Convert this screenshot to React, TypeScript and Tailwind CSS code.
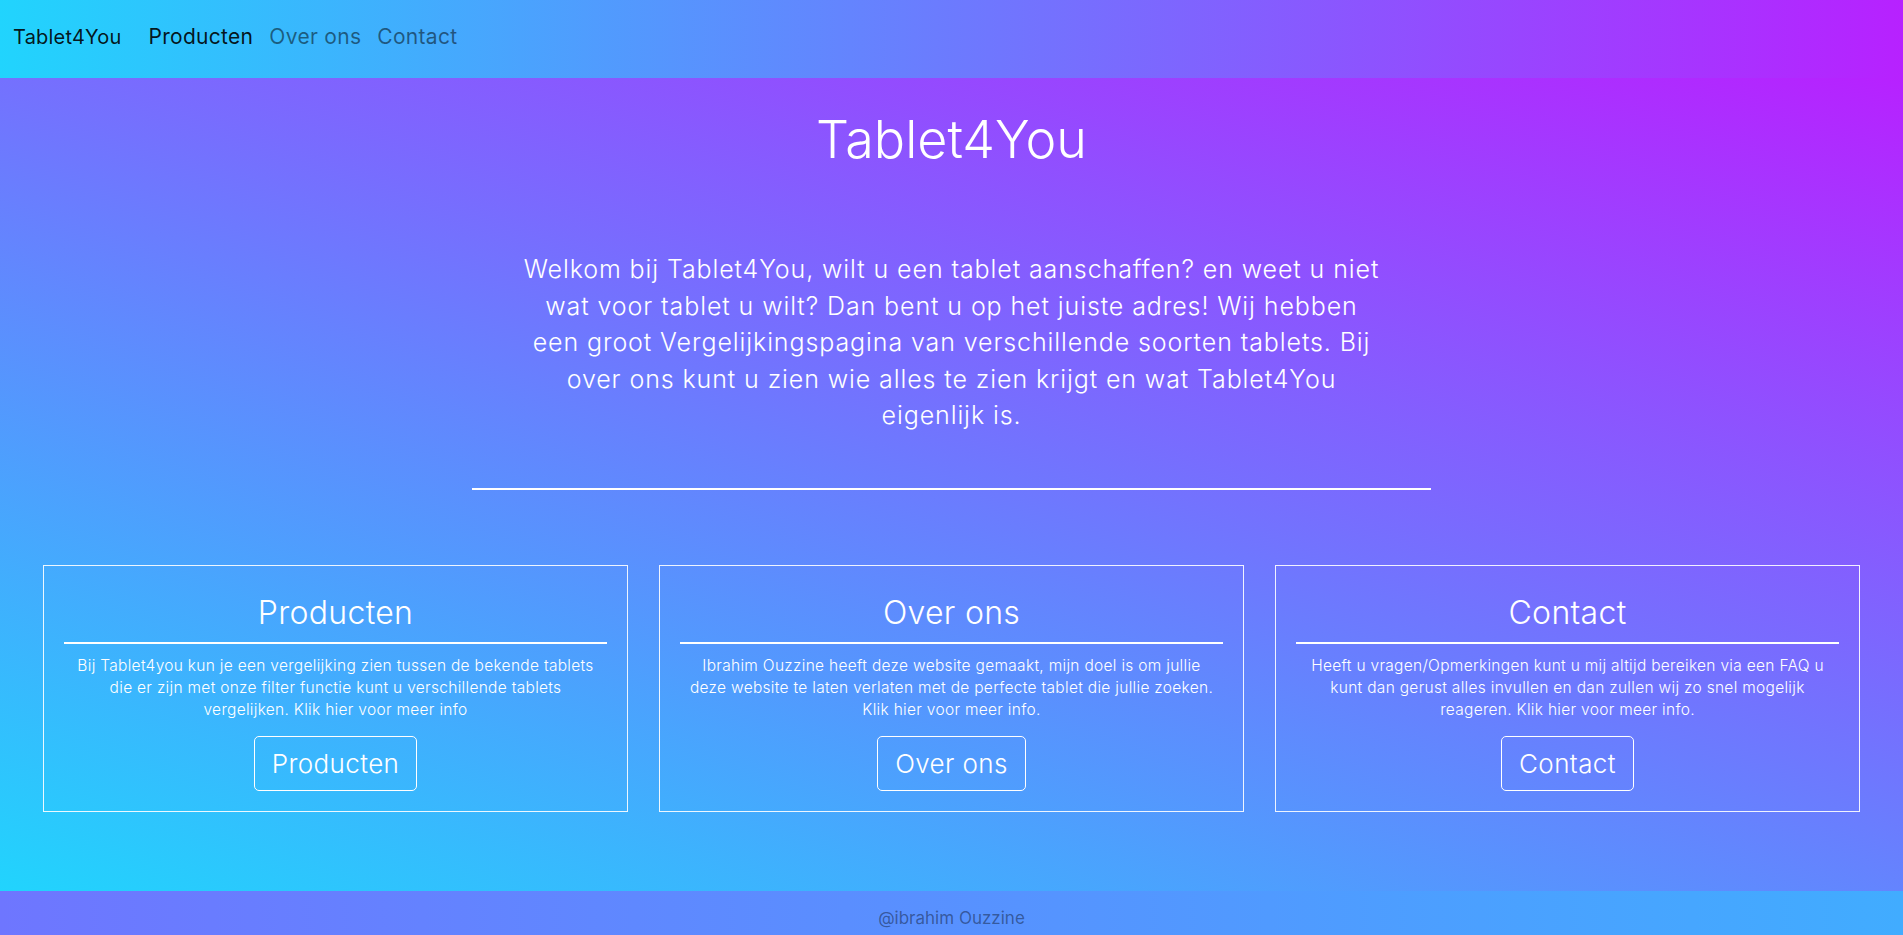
import React from "react";

const font = { fontFamily: '"Inter", "Open Sans", sans-serif' };

const cards = [
  {
    title: "Producten",
    lines: [
      "Bij Tablet4you kun je een vergelijking zien tussen de bekende tablets",
      "die er zijn met onze filter functie kunt u verschillende tablets",
      "vergelijken. Klik hier voor meer info",
    ],
  },
  {
    title: "Over ons",
    lines: [
      "Ibrahim Ouzzine heeft deze website gemaakt, mijn doel is om jullie",
      "deze website te laten verlaten met de perfecte tablet die jullie zoeken.",
      "Klik hier voor meer info.",
    ],
  },
  {
    title: "Contact",
    lines: [
      "Heeft u vragen/Opmerkingen kunt u mij altijd bereiken via een FAQ u",
      "kunt dan gerust alles invullen en dan zullen wij zo snel mogelijk",
      "reageren. Klik hier voor meer info.",
    ],
  },
];

function Card({ title, lines }: { title: string; lines: string[] }) {
  return (
    <div className="flex flex-col items-center border border-white/90 px-[20px] pt-[28px] pb-[20px] text-white">
      <h2 className="text-[32px] leading-[38px] font-light tracking-[0.3px]">{title}</h2>
      <hr className="mt-[10px] w-full border-0 border-t-2 border-white" />
      <p className="mt-[11px] text-center text-[15.5px] leading-[22px] font-light tracking-[0.3px]">
        {lines.map((l, i) => (
          <React.Fragment key={i}>
            {l}
            {i < lines.length - 1 && <br />}
          </React.Fragment>
        ))}
      </p>
      <button className="mt-[15px] h-[55px] rounded-[5px] border border-white px-[17px] text-[26px] font-light tracking-[0.4px] text-white">
        {title}
      </button>
    </div>
  );
}

export default function App() {
  return (
    <div className="flex min-h-screen flex-col" style={font}>
      {/* navbar */}
      <nav className="flex h-[78px] items-center bg-[linear-gradient(to_right,#21d4fd,#b721ff)] px-[13px] pb-[5px] text-[21px] tracking-[0.3px]">
        <a className="mr-[19px] text-[20px] tracking-[0.2px] text-black/90">Tablet4You</a>
        <a className="px-[8px] text-black/90">Producten</a>
        <a className="px-[8px] text-black/50">Over ons</a>
        <a className="px-[8px] text-black/50">Contact</a>
      </nav>

      {/* main */}
      <main className="flex flex-1 flex-col items-center bg-[linear-gradient(19deg,#21D4FD_0%,#B721FF_100%)] pb-[79px] text-white">
        <h1 className="mt-[31px] text-[52px] leading-[62px] font-light">Tablet4You</h1>
        <p className="mt-[80px] text-center text-[25px] leading-[36.5px] font-light tracking-[0.9px]">
          Welkom bij Tablet4You, wilt u een tablet aanschaffen? en weet u niet
          <br />
          wat voor tablet u wilt? Dan bent u op het juiste adres! Wij hebben
          <br />
          een groot Vergelijkingspagina van verschillende soorten tablets. Bij
          <br />
          over ons kunt u zien wie alles te zien krijgt en wat Tablet4You
          <br />
          eigenlijk is.
        </p>
        <hr className="mt-[54px] w-[959px] border-0 border-t-2 border-white" />
        <div className="mt-[75px] grid w-full grid-cols-3 gap-[31px] px-[43px]">
          {cards.map((c) => (
            <Card key={c.title} title={c.title} lines={c.lines} />
          ))}
        </div>
      </main>

      {/* footer */}
      <footer className="flex h-[45px] items-center justify-center bg-[linear-gradient(to_right,#6e76ff,#41acff)] pt-[11px] text-[17px] text-black/40">
        @ibrahim Ouzzine
      </footer>
    </div>
  );
}
